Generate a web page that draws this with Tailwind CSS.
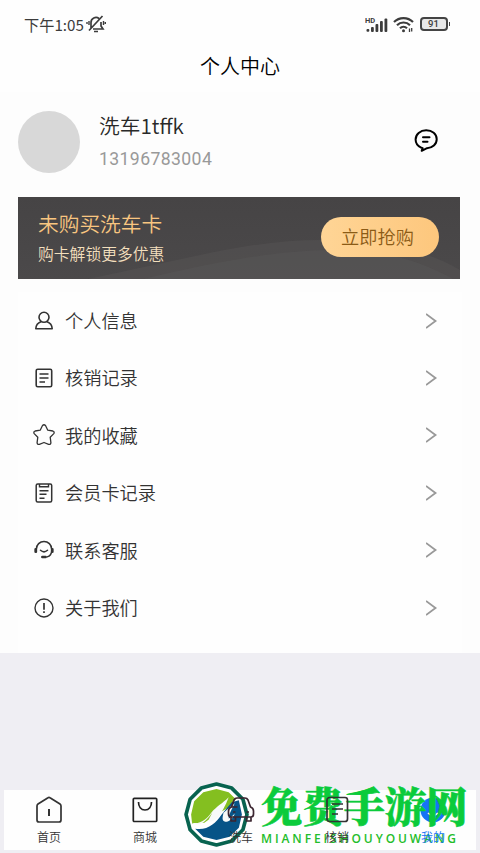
<!DOCTYPE html>
<html lang="zh-CN">
<head>
  <meta charset="UTF-8" />
  <meta name="viewport" content="width=device-width, initial-scale=1" />
  <title>个人中心</title>
  <script src="https://cdn.jsdelivr.net/npm/@tailwindcss/browser@4"></script>
  <style>
    body {
      font-family: 'Noto Sans CJK SC', 'Noto Sans', sans-serif;
    }
  </style>
</head>
<body class="bg-[#efeef3] h-[853px] w-[480px] overflow-hidden flex flex-col text-[#333] font-[350]">

  <!-- Status bar -->
  <div class="h-[44px] shrink-0 bg-[#fefefe] flex items-center justify-between pl-6 pr-[30px] pt-[4px] text-[#3c3c3c]">
    <div class="flex items-center gap-[2px]">
      <span class="text-[15.2px] leading-5 font-normal">下午1:05</span>
      <svg class="w-5 h-[18px]" viewBox="0 0 20 18" fill="none" stroke="currentColor" stroke-width="1.7">
        <path d="M5 13.500V7.500a5 5 0 0 1 8-4M15 7v4l2 3H7M16.500 1L3 15.500" />
        <path d="M8 16.500h4M3 6v4M1 7v2M17.500 6v4M19.300 7v2" stroke-width="1.400" />
      </svg>
    </div>
    <div class="flex items-center">
      <svg class="w-[23px] h-[17px] mr-[5px]" viewBox="0 0 23 17">
        <g fill="currentColor">
          <rect x="1.500" y="13" width="2.800" height="2.800" rx="1" />
          <rect x="6" y="11" width="2.800" height="5" rx="1" />
          <rect x="10.500" y="8" width="2.800" height="8" rx="1" />
          <rect x="15" y="5" width="2.800" height="11" rx="1" />
          <rect x="19.500" y="2.500" width="2.800" height="13.500" rx="1" />
          <text x="0" y="7" font-size="7.5" font-weight="700" font-family="Roboto">HD</text>
        </g>
      </svg>
      <svg class="w-[21px] h-[17px] mr-[6px]" viewBox="0 0 21 17" fill="none" stroke="currentColor" stroke-width="2.200">
        <path d="M1 6a13.500 13.500 0 0 1 19 0M4 9.200a9.200 9.200 0 0 1 13 0M7 12.200a5 5 0 0 1 7 0" />
        <circle cx="10.500" cy="14.800" r="1.500" fill="currentColor" stroke="none" />
        <path d="M16.500 12.500v3.500M18.700 12v3.500" stroke-width="1.300" />
      </svg>
      <div class="w-[28px] h-[14px] border-2 border-[#444] rounded-[4px] flex items-center justify-center bg-[#e8e8e8] text-[9.5px] leading-none font-medium font-[Roboto]">91</div>
      <div class="w-[1.5px] h-[4px] ml-px bg-[#444]"></div>
    </div>
  </div>

  <!-- Title -->
  <header class="h-[48px] shrink-0 bg-[#fefefe] flex items-center justify-center text-black text-xl leading-none pb-1">个人中心</header>

  <main class="h-[561px] shrink-0 bg-[#fdfdfd] px-[18px]">

    <!-- Profile -->
    <section class="h-[105px] flex items-start pt-[19px]">
      <div class="w-[62px] h-[62px] rounded-full bg-[#d8d8d8] shrink-0"></div>
      <div class="ml-[19px] flex-1">
        <div class="-mt-px text-[20.7px] leading-[30px] text-[#292929]">洗车1tffk</div>
        <div class="mt-[8px] text-[17.6px] leading-[22px] text-[#999] font-normal font-[Roboto] tracking-[0.4px]">13196783004</div>
      </div>
      <svg class="w-6 h-6 mt-[17px] mr-[24px]" viewBox="0 0 24 24" fill="none" stroke="#000" stroke-width="2" stroke-linecap="round" stroke-linejoin="round">
        <path d="M7.500 19.800C3.800 18.200 1.600 15.200 1.600 11.500 1.600 6.300 6.200 2.300 12.200 2.300S22.700 6 22.700 11.200s-4.300 8.800-9.700 9l-5.300 2.600.9-2.700z" />
        <path d="M9 9.300h6.500M9 13.800h4.500" />
      </svg>
    </section>

    <!-- Wash card banner -->
    <section class="h-[82px] w-[442px] relative bg-gradient-to-b from-[#464445] to-[#4b494a] overflow-hidden">
      <svg class="absolute inset-0 w-full h-full" viewBox="0 0 442 82">
        <path d="M70 82C190 57 240 42 310 43c60 1 102 12 132 30v9z" fill="#5a5858" opacity=".4" />
        <path d="M125 82C220 60 280 50 340 54c45 3 75 17 95 28z" fill="#5e5c5c" opacity=".3" />
      </svg>
      <div class="relative h-full flex items-center justify-between pl-5 pr-[21px]">
        <div class="pb-px">
          <div class="text-[20.7px] leading-[30px] text-[#f9c680]">未购买洗车卡</div>
          <div class="mt-px text-[15.8px] leading-[29px] text-[#f3dfbd]">购卡解锁更多优惠</div>
        </div>
        <button class="w-[118px] h-[40px] mb-[2px] rounded-full bg-gradient-to-r from-[#ffd596] to-[#fdc77d] text-[18.2px] leading-none text-[#8b5b16] pr-[5px] pb-[2px]">立即抢购</button>
      </div>
    </section>

    <!-- Menu -->
    <ul class="mt-[13px] h-[361px] bg-[#fefefe] text-[18.2px] leading-none" id="menu">
      <li class="h-[57.4px] flex items-center pl-[15px] pr-[24px]">
        <svg class="w-[22px] h-[22px] mr-[10px]" viewBox="0 0 22 22" fill="none" stroke="#333" stroke-width="1.600" stroke-linejoin="round">
          <circle cx="11" cy="7.300" r="5" />
          <path d="M8 11.700c-3 1-5 3.500-5.200 7h16.400C19 15.200 17 12.700 14 11.700" />
        </svg>
        <span class="flex-1 pb-[2px]">个人信息</span>
        <svg class="w-3 h-4" viewBox="0 0 12 16" fill="none" stroke="#999" stroke-width="1.800"><path d="M0 1l9.500 7L0 15" /></svg>
      </li>
      <li class="h-[57.4px] flex items-center pl-[15px] pr-[24px]">
        <svg class="w-[22px] h-[22px] mr-[10px]" viewBox="0 0 22 22" fill="none" stroke="#333" stroke-width="1.600">
          <rect x="3.200" y="2.200" width="15.500" height="17.600" rx="1.500" />
          <path d="M6.500 7h9M6.500 11h9M6.500 15h5.500" stroke-width="1.400" />
        </svg>
        <span class="flex-1 pb-px">核销记录</span>
        <svg class="w-3 h-4" viewBox="0 0 12 16" fill="none" stroke="#999" stroke-width="1.800"><path d="M0 1l9.500 7L0 15" /></svg>
      </li>
      <li class="h-[57.4px] flex items-center pl-[15px] pr-[24px]">
        <svg class="w-[22px] h-[22px] mr-[10px]" viewBox="0 0 22 22" fill="none" stroke="#333" stroke-width="1.300" stroke-linejoin="round">
          <path d="M9.500 1.500q1.500-1.500 3 0l2.300 4.700 5 .8q2 .8 1 2.600l-3.600 3.600.7 5.400q-.2 2.200-2.300 1.800L11 18.500l-4.600 1.900q-2.100.4-2.300-1.800l.7-5.400-3.600-3.600q-1-1.800 1-2.600l5-.8z" />
        </svg>
        <span class="flex-1 pb-px">我的收藏</span>
        <svg class="w-3 h-4" viewBox="0 0 12 16" fill="none" stroke="#999" stroke-width="1.800"><path d="M0 1l9.500 7L0 15" /></svg>
      </li>
      <li class="h-[57.4px] flex items-center pl-[15px] pr-[24px]">
        <svg class="w-[22px] h-[22px] mr-[10px]" viewBox="0 0 22 22" fill="none" stroke="#333" stroke-width="1.500">
          <rect x="3.200" y="2" width="15.500" height="18" rx="1.500" />
          <path d="M6.500 2v2.800h9V2M6.500 8.700h9M6.500 12.200h7M6.500 16.200h5" stroke-width="1.400" />
        </svg>
        <span class="flex-1 pb-[2px]">会员卡记录</span>
        <svg class="w-3 h-4" viewBox="0 0 12 16" fill="none" stroke="#999" stroke-width="1.800"><path d="M0 1l9.500 7L0 15" /></svg>
      </li>
      <li class="h-[57.4px] flex items-center pl-[15px] pr-[24px]">
        <svg class="w-[22px] h-[22px] mr-[10px]" viewBox="0 0 22 22" fill="none" stroke="#333" stroke-width="1.500" stroke-linecap="round">
          <path d="M3.400 13V10a7.600 7.600 0 0 1 15.200 0v2c0 3-2 5.200-4.500 5.900" />
          <path d="M7.500 11.300q3.500 3.200 7 0" />
          <path d="M2.600 10.300v2.500M19.400 10.300v2.500M9.300 18h3.300" stroke-width="2.500" />
        </svg>
        <span class="flex-1 pb-px">联系客服</span>
        <svg class="w-3 h-4" viewBox="0 0 12 16" fill="none" stroke="#999" stroke-width="1.800"><path d="M0 1l9.500 7L0 15" /></svg>
      </li>
      <li class="h-[57.4px] flex items-center pl-[15px] pr-[24px]">
        <svg class="w-[22px] h-[22px] mr-[10px]" viewBox="0 0 22 22" fill="none" stroke="#333" stroke-width="1.400">
          <circle cx="11" cy="11" r="9" />
          <path d="M11 6v6.800M11 14.300v1.800" stroke-width="1.700" />
        </svg>
        <span class="flex-1 pb-[2px]">关于我们</span>
        <svg class="w-3 h-4" viewBox="0 0 12 16" fill="none" stroke="#999" stroke-width="1.800"><path d="M0 1l9.500 7L0 15" /></svg>
      </li>
    </ul>
  </main>

  <!-- Tab bar -->
  <nav class="mt-auto mb-[3px] mx-1 h-[60px] shrink-0 bg-[#fefefe] text-[12px] leading-4">
    <div class="grid grid-cols-5 w-[480px] -ml-[3px] pt-[5px]">
      <a class="flex flex-col items-center gap-[5px]">
        <svg class="w-7 h-[29px]" viewBox="0 0 28 29" fill="none" stroke="#333" stroke-width="1.700" stroke-linejoin="round">
          <path d="M2 11q0-1.300 1-2L13 2.700q1-.7 2 0L25 9q1 .7 1 2V25q0 2-2 2H4q-2 0-2-2z" />
          <path d="M14 14v7" stroke-width="2" />
        </svg>
        <span>首页</span>
      </a>
      <a class="flex flex-col items-center gap-[5px]">
        <svg class="w-7 h-[29px]" viewBox="0 0 28 29" fill="none" stroke="#222" stroke-width="1.700">
          <rect x="2.300" y="3.300" width="23.400" height="23.200" rx="1" />
          <path d="M7.500 7c0 4.500 2.500 8 6.500 8s6.500-3.500 6.500-8" />
        </svg>
        <span>商城</span>
      </a>
      <a class="relative z-20 flex flex-col items-center gap-[5px]">
        <svg class="w-7 h-[29px]" viewBox="0 0 28 29" fill="none" stroke="#3b2530" stroke-width="1.700" stroke-linejoin="round">
          <path d="M4.500 12l2.500-7q1-2 3-2h8q2 0 3 2l2.500 7q3 1 3 4v3q0 3-2.500 3H4q-2.500 0-2.500-3v-3q0-3 3-4h6M4 22v4h4.500v-4M19.500 22v4H24v-4M6 17h2.500M19.500 17H22" />
        </svg>
        <span>洗车</span>
      </a>
      <a class="relative z-20 flex flex-col items-center gap-[5px]">
        <svg class="w-7 h-[29px]" viewBox="0 0 28 29" fill="none" stroke="#333" stroke-width="1.700">
          <rect x="4" y="2.500" width="20.500" height="24" rx="2.500" />
          <path d="M9 9h11M9 14h11M9 19h6" />
        </svg>
        <span>核销</span>
      </a>
      <a class="flex flex-col items-center gap-[5px] text-[#1673f5]">
        <svg class="w-7 h-[29px]" viewBox="0 0 28 29" fill="none">
          <circle cx="14" cy="15" r="12.500" fill="#1673f5" />
          <path d="M9 18q5 5 10 0" stroke="#fff" stroke-width="1.600" />
        </svg>
        <span class="relative z-20">我的</span>
      </a>
    </div>
  </nav>

  <!-- Site mark laid over the tab bar -->
  <div class="absolute z-10 left-[184px] top-[782px] w-[292px] h-[68px] flex">
    <svg class="w-[65px] h-[65px] shrink-0" viewBox="0 0 64 64">
      <path d="M32 2l15 4 11 11 4 15-4 15-11 11-15 4-15-4L6 47 2 32 6 17 17 6z" fill="#fff" stroke="#08634f" stroke-width="3.600" stroke-linejoin="round" />
      <path d="M32 7l12 3 7 7-7 8-14 8-10 7-12 1-1-9 3-13 9-9z" fill="#84bf20" />
      <path d="M54 18l3 14-3 13-9 9-13 3-13-3-8-8c12 2 20-5 26-14l10-12z" fill="#075487" />
      <path d="M7 40c9 2 15-3 20-10 5-6 11-9 17-15-3 8-7 15-10 20 5-5 11-10 16-14-3 6-6 11-6 15 2-1 4-3 6-5-2 6-7 9-10 8-3-1-2-5-1-9-5 5-9 9-14 9-2-1 1-5 3-9-7 9-12 15-21 10z" fill="#f8faf9" />
    </svg>
    <div class="ml-[12px] w-[215px] shrink-0 whitespace-nowrap">
      <div class="h-[50px] text-[41.3px] leading-[45px] font-black text-[#0bcb3b] [-webkit-text-stroke:0.6px_#0bcb3b] font-['Noto_Serif_CJK_SC','Noto_Sans_CJK_SC',serif]">免费手游网</div>
      <div class="h-[16px] text-[12px] leading-[13px] font-semibold text-[#24bd2a] tracking-[2.9px] font-['Open_Sans']">MIANFEISHOUYOUWANG</div>
    </div>
  </div>
</body>
</html>
